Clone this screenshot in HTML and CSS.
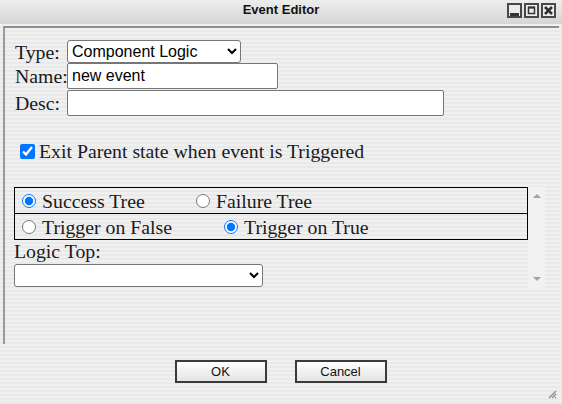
FILE: index.html
```html
<!DOCTYPE html>
<html>
<head>
<meta charset="utf-8">
<title>Event Editor</title>
<link rel="stylesheet" href="styles.css">
</head>
<body>
<div class="window">
  <div class="titlebar">
    <span class="title">Event Editor</span>
    <div class="wbtns">
      <svg class="wbtn" width="15" height="15" viewBox="0 0 15 15"><rect x="1" y="1" width="13" height="13" fill="#ececec" stroke="#484848" stroke-width="2"/><rect x="3" y="10" width="9" height="3" fill="#333"/></svg>
      <svg class="wbtn" width="15" height="15" viewBox="0 0 15 15"><rect x="1" y="1" width="13" height="13" fill="#ececec" stroke="#484848" stroke-width="2"/><rect x="4.5" y="4.5" width="6" height="6" fill="none" stroke="#333" stroke-width="1.5"/><rect x="4" y="3.5" width="7" height="2" fill="#333"/></svg>
      <svg class="wbtn" width="15" height="15" viewBox="0 0 15 15"><rect x="1" y="1" width="13" height="13" fill="#ececec" stroke="#484848" stroke-width="2"/><path d="M4 4 L11 11 M11 4 L4 11" stroke="#333" stroke-width="2.6"/></svg>
    </div>
  </div>
  <div class="panel">
    <div class="fields">
      <label class="lbl">Type:</label>
      <select class="sel sel-type"><option>Component Logic</option></select>
      <label class="lbl">Name:</label>
      <input class="txt txt-name" type="text" value="new event">
      <label class="lbl">Desc:</label>
      <input class="txt txt-desc" type="text" value="">
    </div>
    <div class="check-row">
      <input class="chk" type="checkbox" checked>
      <span>Exit Parent state when event is Triggered</span>
    </div>
    <div class="scrollbox">
      <div class="scroll-content">
        <div class="radio-box">
          <div class="rrow">
            <label class="opt opt-success"><input class="rad" type="radio" name="tree" checked><span>Success Tree</span></label>
            <label class="opt"><input class="rad" type="radio" name="tree"><span>Failure Tree</span></label>
          </div>
          <div class="rrow rrow-last">
            <label class="opt opt-false"><input class="rad" type="radio" name="trig"><span>Trigger on False</span></label>
            <label class="opt"><input class="rad" type="radio" name="trig" checked><span>Trigger on True</span></label>
          </div>
        </div>
        <div class="logic-label">Logic Top:</div>
        <select class="sel sel-logic"><option></option></select>
      </div>
      <div class="vscroll">
        <span class="arrow-up"></span>
        <span class="arrow-down"></span>
      </div>
    </div>
  </div>
  <div class="actions">
    <button class="btn">OK</button>
    <button class="btn">Cancel</button>
  </div>
  <svg class="grip" width="9" height="9" viewBox="0 0 9 9"><path d="M8 1 L1 8 M8 4 L4 8 M8 7 L7 8" stroke="#8a8a8a" stroke-width="1.2"/></svg>
</div>
</body>
</html>
```

FILE: styles.css
```css
html, body {
  margin: 0;
  padding: 0;
}
body {
  width: 562px;
  height: 404px;
  overflow: hidden;
}
.window {
  position: relative;
  width: 562px;
  height: 404px;
  box-sizing: border-box;
  background: repeating-linear-gradient(to bottom, #f0f0f0 0 2px, #e9e9e9 2px 4px);
  font-family: "Liberation Serif", "Times New Roman", serif;
  color: #1a1a1a;
}
.titlebar {
  height: 24px;
  display: grid;
  grid-template-columns: 1fr auto 1fr;
  align-items: start;
  background: linear-gradient(to bottom, #ededed, #d5d5d5);
}
.title {
  grid-column: 2;
  font-family: "Liberation Sans", Arial, sans-serif;
  font-weight: bold;
  font-size: 13px;
  line-height: 20px;
  color: #111;
}
.wbtns {
  grid-column: 3;
  justify-self: end;
  display: flex;
  gap: 2px;
  margin-top: 3px;
  margin-right: 6px;
}
.wbtn {
  display: block;
}
.panel {
  margin: 2px 3px 0 3px;
  height: 318px;
  box-sizing: border-box;
  border-top: 2px solid #8e8e8e;
  border-left: 2px solid #9a9a9a;
  padding: 12px 0 0 9px;
}
.fields {
  display: grid;
  grid-template-columns: 53px auto;
  justify-items: start;
  align-items: center;
  font-size: 19.8px;
  line-height: 22px;
}
.lbl {
  padding-left: 1px;
  white-space: nowrap;
}
.sel {
  font-family: "Liberation Sans", Arial, sans-serif;
  font-size: 16px;
  height: 23px;
  box-sizing: border-box;
  border: 1px solid #767676;
  border-radius: 3px;
  background: #fff;
  color: #000;
  margin: 0;
}
.sel-type {
  width: 174px;
}
.txt {
  font-family: "Liberation Sans", Arial, sans-serif;
  font-size: 16px;
  height: 26px;
  box-sizing: border-box;
  border: 1px solid #767676;
  border-radius: 2px;
  padding: 0 4px;
  margin: 0;
  background: #fff;
  color: #000;
}
.txt-name {
  width: 211px;
}
.txt-desc {
  width: 377px;
  margin-top: 1px;
}
.check-row {
  display: flex;
  align-items: center;
  margin-top: 24px;
  height: 22px;
  font-size: 19.8px;
  line-height: 22px;
}
.chk {
  width: 15px;
  height: 15px;
  margin: 0 4px 0 6px;
}
.scrollbox {
  display: flex;
  margin-top: 25px;
  width: 531px;
  height: 103px;
}
.scroll-content {
  flex: 1;
  font-size: 19.8px;
  line-height: 22px;
}
.radio-box {
  border: 1px solid #000;
}
.rrow {
  display: flex;
  align-items: center;
  height: 25px;
  border-bottom: 1px solid #000;
  padding-left: 7px;
}
.rrow-last {
  border-bottom: none;
}
.opt {
  display: flex;
  align-items: center;
  white-space: nowrap;
}
.opt-success {
  width: 174px;
}
.opt-false {
  width: 202px;
}
.rad {
  width: 14px;
  height: 14px;
  margin: 0 6px 0 0;
}
.logic-label {
  height: 22px;
}
.sel-logic {
  width: 249px;
  margin-top: 2px;
}
.vscroll {
  width: 17px;
  background: #f1f1f1;
  display: flex;
  flex-direction: column;
  justify-content: space-between;
  align-items: center;
  padding: 7px 0 9px;
  box-sizing: border-box;
}
.arrow-up {
  width: 0;
  height: 0;
  border-left: 4px solid transparent;
  border-right: 4px solid transparent;
  border-bottom: 4px solid #a3a3a3;
}
.arrow-down {
  width: 0;
  height: 0;
  border-left: 4px solid transparent;
  border-right: 4px solid transparent;
  border-top: 4px solid #a3a3a3;
}
.actions {
  display: flex;
  justify-content: center;
  gap: 28px;
  margin-top: 16px;
  padding-right: 1px;
}
.btn {
  width: 92px;
  height: 23px;
  box-sizing: border-box;
  border: 2px solid #3a3a3a;
  background: linear-gradient(to bottom, #ffffff, #e4e4e4);
  font-family: "Liberation Sans", Arial, sans-serif;
  font-size: 13px;
  color: #111;
  padding: 0;
  margin: 0;
}
.grip {
  position: absolute;
  right: 5px;
  bottom: 5px;
}
```
